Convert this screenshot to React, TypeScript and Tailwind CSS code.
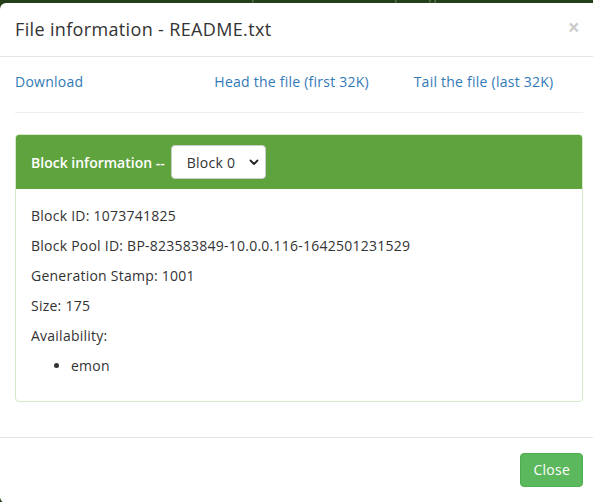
import { useState } from "react";

const font = { fontFamily: '"Open Sans", "Liberation Sans", sans-serif' };

function Chevron() {
  return (
    <svg width="10" height="7" viewBox="0 0 10 7" className="ml-auto">
      <path d="M1.5 1.5 L5 5 L8.5 1.5" fill="none" stroke="#222" strokeWidth="1.8" strokeLinecap="round" strokeLinejoin="round" />
    </svg>
  );
}

export default function App() {
  const [block] = useState("Block 0");
  const details = [
    "Block ID: 1073741825",
    "Block Pool ID: BP-823583849-10.0.0.116-1642501231529",
    "Generation Stamp: 1001",
    "Size: 175",
    "Availability:",
  ];

  return (
    <div className="w-[593px] h-[502px] overflow-hidden bg-[#24401a] text-[#333] text-[14px] tracking-[0.24px]" style={font}>
      {/* navbar behind the backdrop */}
      <div className="h-[3px] overflow-hidden">
        <div className="flex -mt-[15px] h-[20px] leading-[20px] text-[#5b7a4a] whitespace-nowrap tracking-normal">
          <span className="ml-[23px]">Datanode Volume Failures</span>
          <span className="ml-[32px]">Snapshot</span>
          <span className="ml-[66px]">Startup Progress</span>
          <span className="ml-[32px]">Utilities</span>
        </div>
      </div>

      <div className="w-[600px] bg-white rounded-[6px]">
        <div className="h-[54px] flex items-center px-[15px] border-b border-[#e5e5e5]">
          <h4 className="text-[18px] text-[#333] leading-[26px] -mt-[2px] tracking-[0.35px]">File information - README.txt</h4>
          <span className="ml-auto mr-[5px] -mt-[4px] text-[21px] font-bold text-black opacity-20 leading-none">×</span>
        </div>

        <div className="p-[15px] w-[598px]">
          <div className="grid grid-cols-3 -mx-[15px] leading-[20px] text-[#337ab7]">
            <a className="px-[15px]">Download</a>
            <a className="px-[15px]">Head the file (first 32K)</a>
            <a className="px-[15px]">Tail the file (last 32K)</a>
          </div>
          <hr className="mt-[20px] mb-[21px] border-[#eee]" />

          <div className="border border-[#d6e9c6] rounded-[4px] mb-[20px]">
            <div className="bg-[#5fa33e] text-white px-[15px] py-[10px] rounded-t-[3px] flex items-center">
              <span className="font-semibold tracking-normal">Block information --</span>
              <div className="ml-[6px] w-[95px] h-[34px] bg-white rounded-[4px] border border-[#ccc] flex items-center pl-[15px] pr-[6px] text-[#333]">
                <span>{block}</span>
                <Chevron />
              </div>
            </div>
            <div className="pt-[17px] px-[15px] pb-[15px] leading-[20px]">
              {details.map((d) => (
                <p key={d} className="mb-[10px]">{d}</p>
              ))}
              <ul className="list-disc pl-[40px] mb-[10px]">
                <li>emon</li>
              </ul>
            </div>
          </div>
        </div>

        <div className="border-t border-[#e5e5e5] pt-[15px] pb-[16px] px-[15px] w-[598px] flex justify-end">
          <button className="bg-[#5cb85c] border border-[#4cae4c] text-white rounded-[4px] px-[12px] h-[34px] leading-[20px]">
            Close
          </button>
        </div>
      </div>
    </div>
  );
}
